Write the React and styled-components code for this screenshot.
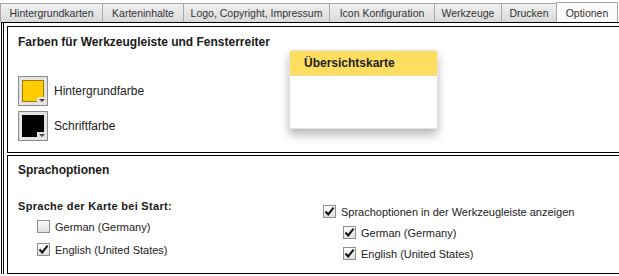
import React from "react";
import styled, { createGlobalStyle } from "styled-components";

const Global = createGlobalStyle`
  html, body {
    margin: 0;
    padding: 0;
    background: #fff;
    overflow: hidden;
  }
  body {
    font-family: "Liberation Sans", Arial, sans-serif;
    color: #222;
  }
`;

const tabs = [
  { label: "Hintergrundkarten", w: 103 },
  { label: "Karteninhalte", w: 82 },
  { label: "Logo, Copyright, Impressum", w: 147 },
  { label: "Icon Konfiguration", w: 106 },
  { label: "Werkzeuge", w: 68 },
  { label: "Drucken", w: 56 },
  { label: "Optionen", w: 62, active: true },
];

const Page = styled.div`
  width: 640px;
  height: 276px;
  overflow: hidden;
  position: relative;
`;

const TabBar = styled.div`
  display: flex;
  align-items: flex-end;
  height: 22px;
`;

const Tab = styled.div`
  width: ${(p) => p.w}px;
  height: ${(p) => (p.active ? "20px" : "19px")};
  box-sizing: border-box;
  display: flex;
  align-items: center;
  justify-content: center;
  white-space: nowrap;
  font-size: 10.5px;
  color: #333;
  border: 1px solid #a8a8a8;
  border-bottom: none;
  margin-left: -1px;
  background: ${(p) =>
    p.active ? "#fbfbfb" : "linear-gradient(#f0f0f0, #dadada)"};
  &:first-child {
    margin-left: 0;
  }
`;

const Pane = styled.div`
  border-top: 1px solid #000;
  border-left: 3px double #000;
  margin-left: 1px;
  padding: 3px 0 0 3px;
  display: flex;
  flex-direction: column;
  gap: 2px;
`;

const Section = styled.div`
  border: 1px solid #000;
  height: ${(p) => p.h}px;
  box-sizing: border-box;
  padding: 0 0 0 10px;
  position: relative;
`;

const Heading = styled.div`
  font-size: 12px;
  font-weight: bold;
  color: #1a1a1a;
  padding-top: ${(p) => p.pt || 8}px;
`;

const SwatchList = styled.div`
  display: flex;
  flex-direction: column;
  gap: 5px;
  margin-top: 27px;
`;

const SwatchRow = styled.div`
  display: flex;
  align-items: center;
  gap: 6px;
  font-size: 12px;
  color: #222;
`;

const SwatchButton = styled.div`
  width: 30px;
  height: 30px;
  box-sizing: border-box;
  border: 1px solid #8a8a8a;
  background: #e4e4e4;
  padding: 3px;
  position: relative;
`;

const SwatchColor = styled.div`
  width: 100%;
  height: 100%;
  box-sizing: border-box;
  background: ${(p) => p.color};
  border: 1px solid ${(p) => p.edge};
`;

const Arrow = styled.div`
  position: absolute;
  right: 1px;
  bottom: 1px;
  width: 9px;
  height: 7px;
  background: #e4e4e4;
  display: flex;
  align-items: center;
  justify-content: center;
  &::after {
    content: "";
    border-left: 3px solid transparent;
    border-right: 3px solid transparent;
    border-top: 3px solid #444;
  }
`;

const Popup = styled.div`
  position: absolute;
  left: 281px;
  top: 23px;
  width: 147px;
  height: 77px;
  background: #fff;
  border: 1px solid #e2e2e2;
  border-radius: 3px;
  overflow: hidden;
  box-shadow: 0 6px 10px rgba(0, 0, 0, 0.28);
`;

const PopupHead = styled.div`
  height: 24px;
  background: #ffdd5e;
  border-bottom: 1px solid #e6d8a0;
  padding-left: 14px;
  display: flex;
  align-items: center;
  font-size: 12px;
  font-weight: bold;
  color: #222;
`;

const Columns = styled.div`
  display: grid;
  grid-template-columns: 305px 1fr;
`;

const Column = styled.div`
  display: flex;
  flex-direction: column;
  gap: ${(p) => p.gap}px;
  padding-top: ${(p) => p.pt || 0}px;
`;

const SubLabel = styled.div`
  font-size: 11px;
  font-weight: bold;
  letter-spacing: 0.3px;
  color: #1a1a1a;
  margin-bottom: -2px;
`;

const CheckRow = styled.label`
  display: flex;
  align-items: center;
  gap: 5px;
  font-size: 11px;
  color: #222;
  padding-left: ${(p) => p.indent || 0}px;
`;

const Box = styled.span`
  width: 13px;
  height: 13px;
  box-sizing: border-box;
  border: 1px solid #8e8e8e;
  background: linear-gradient(#fdfdfd, #dedede);
  display: inline-flex;
  align-items: center;
  justify-content: center;
`;

const Check = ({ checked }) => (
  <Box>
    {checked && (
      <svg width="11" height="11" viewBox="0 0 11 11">
        <path
          d="M1.5 5.5 L4.2 8.4 L9.6 1.6"
          fill="none"
          stroke="#111"
          strokeWidth="2"
        />
      </svg>
    )}
  </Box>
);

export default function App() {
  return (
    <Page>
      <Global />
      <TabBar>
        {tabs.map((t) => (
          <Tab key={t.label} w={t.w} active={t.active}>
            {t.label}
          </Tab>
        ))}
      </TabBar>
      <Pane>
        <Section h={127}>
          <Heading pt={8}>Farben für Werkzeugleiste und Fensterreiter</Heading>
          <SwatchList>
            <SwatchRow>
              <SwatchButton>
                <SwatchColor color="#ffcc00" edge="#9c7c00" />
                <Arrow />
              </SwatchButton>
              Hintergrundfarbe
            </SwatchRow>
            <SwatchRow>
              <SwatchButton>
                <SwatchColor color="#000" edge="#000" />
                <Arrow />
              </SwatchButton>
              Schriftfarbe
            </SwatchRow>
          </SwatchList>
          <Popup>
            <PopupHead>Übersichtskarte</PopupHead>
          </Popup>
        </Section>
        <Section h={119}>
          <Heading pt={7}>Sprachoptionen</Heading>
          <Columns>
            <Column gap={10} pt={23}>
              <SubLabel>Sprache der Karte bei Start:</SubLabel>
              <CheckRow indent={19}>
                <Check /> German (Germany)
              </CheckRow>
              <CheckRow indent={19}>
                <Check checked /> English (United States)
              </CheckRow>
            </Column>
            <Column gap={8} pt={28}>
              <CheckRow>
                <Check checked /> Sprachoptionen in der Werkzeugleiste anzeigen
              </CheckRow>
              <CheckRow indent={20}>
                <Check checked /> German (Germany)
              </CheckRow>
              <CheckRow indent={20}>
                <Check checked /> English (United States)
              </CheckRow>
            </Column>
          </Columns>
        </Section>
      </Pane>
    </Page>
  );
}
